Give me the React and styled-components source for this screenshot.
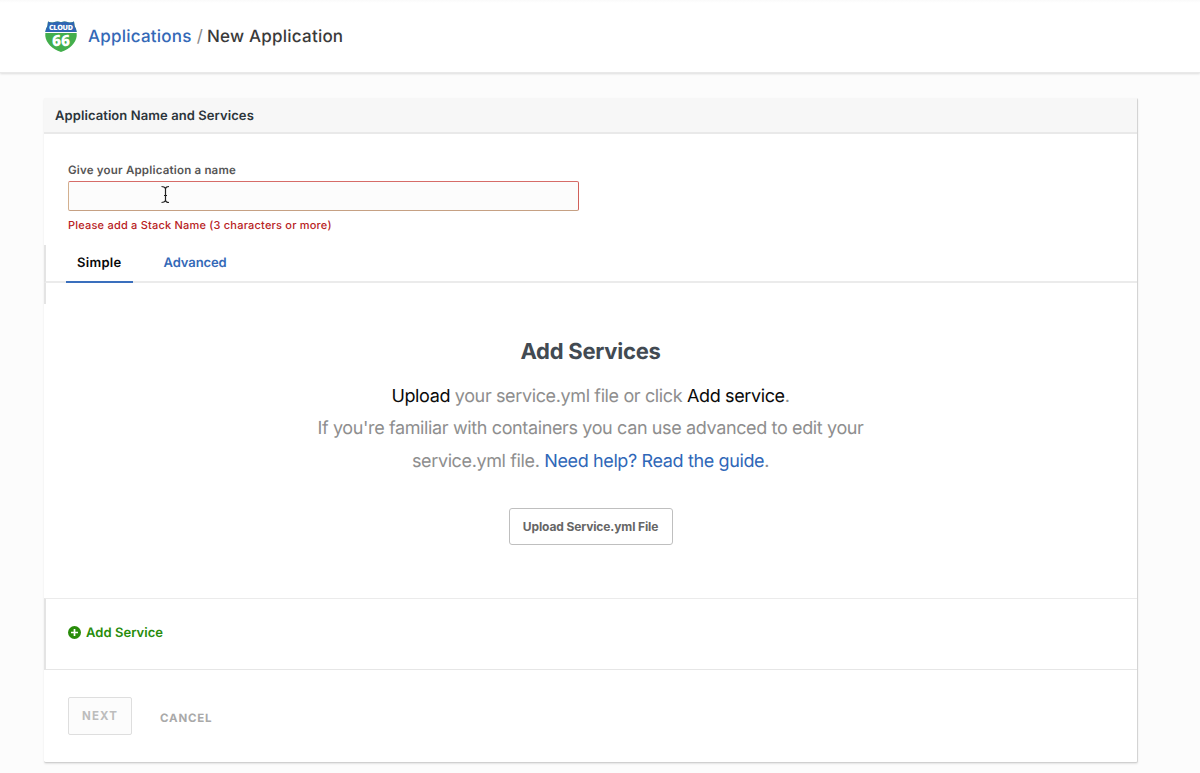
import React from "react";
import styled, { createGlobalStyle } from "styled-components";

const GlobalStyle = createGlobalStyle`
  *, *::before, *::after { box-sizing: border-box; }
  body {
    margin: 0;
    height: 773px;
    overflow: hidden;
    background: #fcfcfc;
    font-family: Inter, "Liberation Sans", sans-serif;
    text-rendering: geometricPrecision;
  }
  h1, h2, p { margin: 0; }
  button { font-family: inherit; cursor: pointer; }
`;

const Header = styled.header`
  height: 73px;
  padding: 0 45px;
  display: flex;
  align-items: center;
  background: linear-gradient(#fafafa, #fff 3px);
  border-bottom: 1px solid #e9e9e9;
  box-shadow: 0 1px 2px rgba(0, 0, 0, 0.12);
`;

const Logo = styled.svg`
  width: 32px;
  height: 33px;
  flex: none;
`;

const Breadcrumb = styled.h1`
  margin-left: 11px;
  padding-top: 1px;
  display: flex;
  font-size: 17px;
  line-height: 24px;
  font-weight: 500;
  letter-spacing: 0.22px;
  color: #3a3a3a;
`;

const CrumbLink = styled.a`
  color: #3469b7;
`;

const Slash = styled.span`
  margin: 0 4px 0 5px;
  font-weight: 400;
  color: #8a8a8a;
`;

const Card = styled.main`
  width: 1094px;
  height: 665px;
  margin: 25px 0 0 44px;
  display: flex;
  flex-direction: column;
  background: #fff;
  border-right: 1px solid #d4d4d4;
  border-bottom: 1px solid #d0d0d0;
  border-radius: 2px;
  box-shadow: 0 1px 2px rgba(0, 0, 0, 0.1);
`;

const CardTitle = styled.h2`
  height: 36px;
  padding: 1px 0 0 11px;
  background: #f7f7f7;
  border-bottom: 2px solid #e9e9e9;
  font-size: 13px;
  line-height: 35px;
  font-weight: 600;
  letter-spacing: 0.08px;
  color: #2c353b;
`;

const NameField = styled.div`
  height: 111px;
  padding: 28px 24px 0;
  display: flex;
  flex-direction: column;
`;

const Label = styled.label`
  font-size: 11.5px;
  line-height: 16px;
  font-weight: 600;
  letter-spacing: 0.2px;
  color: #555;
`;

const InputBox = styled.div`
  position: relative;
  width: 511px;
  margin: 3px 0 6px;
`;

const Input = styled.input`
  display: block;
  width: 100%;
  height: 30px;
  padding: 0 8px;
  outline: none;
  background: #fcfcfc;
  border: 1px solid;
  border-color: #d66c68 #d0605a #c6a184 #d3b08f;
  border-radius: 2px;
`;

const TextCursor = styled.svg`
  position: absolute;
  left: 92px;
  top: 4px;
  width: 10px;
  height: 19px;
`;

const ErrorText = styled.p`
  font-size: 11px;
  line-height: 16px;
  font-weight: 500;
  letter-spacing: 0.21px;
  color: #b8221e;
`;

const Tabs = styled.nav`
  height: 38px;
  padding-left: 20px;
  display: flex;
  gap: 20px;
  border-left: 2px solid #e4e4e4;
  border-bottom: 2px solid #ebebeb;
`;

const Tab = styled.a`
  height: 38px;
  padding: 0 11px;
  font-size: 13px;
  line-height: 36px;
  font-weight: 600;
  letter-spacing: ${(p) => (p.$active ? "0.3px" : "-0.1px")};
  color: ${(p) => (p.$active ? "#080808" : "#3469b7")};
  border-bottom: 2px solid ${(p) => (p.$active ? "#3a6fbd" : "transparent")};
`;

const Empty = styled.section`
  height: 315px;
  display: flex;
  flex-direction: column;
  align-items: center;
  background: linear-gradient(#e4e4e4, #e4e4e4) 0 0 / 2px 21px no-repeat;
`;

const EmptyTitle = styled.h2`
  margin-top: 54px;
  font-size: 22px;
  line-height: 30px;
  font-weight: 650;
  letter-spacing: -0.25px;
  color: #424a52;
`;

const EmptyText = styled.p`
  margin-top: 13.5px;
  text-align: center;
  font-size: 18px;
  line-height: 32.6px;
  letter-spacing: -0.37px;
  color: #8e8e8e;
`;

const Line = styled.span`
  display: block;
  white-space: nowrap;
`;

const Strong = styled.span`
  color: #0a0a0a;
`;

const GuideLink = styled.a`
  color: #2f67b8;
`;

const UploadButton = styled.button`
  width: 164px;
  height: 37px;
  margin-top: 29.5px;
  padding: 0;
  background: #fff;
  border: 1px solid #bfbfbf;
  border-radius: 3px;
  font-size: 12px;
  font-weight: 650;
  letter-spacing: -0.12px;
  color: #666;
  white-space: nowrap;
`;

const AddRow = styled.div`
  height: 72px;
  padding: 0 22px 3px;
  display: flex;
  align-items: center;
  gap: 5px;
  border-left: 2px solid #e4e4e4;
  border-top: 1px solid #ebebeb;
  border-bottom: 1px solid #e6e6e6;
  font-size: 13px;
  line-height: 18px;
  font-weight: 600;
  letter-spacing: 0.05px;
  color: #288c0a;
`;

const PlusIcon = styled.svg`
  width: 13px;
  height: 13px;
`;

const Footer = styled.footer`
  padding: 27px 24px 0;
  display: flex;
  gap: 28px;
`;

const NextButton = styled.button`
  width: 64px;
  height: 38px;
  padding: 0;
  background: #fcfcfc;
  border: 1px solid #dedede;
  border-radius: 2px;
  font-size: 11.5px;
  font-weight: 700;
  letter-spacing: 1.1px;
  color: #bdbdbd;
`;

const CancelButton = styled.a`
  padding-top: 2px;
  font-size: 11.5px;
  line-height: 38px;
  font-weight: 700;
  letter-spacing: 0.8px;
  color: #a9a9a9;
`;

export default function App() {
  return (
    <>
      <GlobalStyle />
      <Header>
        <Logo viewBox="0 0 32 33">
          <path
            d="M3 1.5Q6 3.300 9.500 2Q12.500 .7 16 2.300Q19.500 .7 22.500 2Q26 3.300 29 1.500Q29 6 31 9Q32 12 31.700 16C31 23 25 29 16 32C7 29 1 23 .3 16Q0 12 1 9Q3 6 3 1.500Z"
            fill="#43ae4c"
          />
          <path
            d="M3 1.500Q6 3.300 9.500 2Q12.500 .7 16 2.300Q19.500 .7 22.500 2Q26 3.300 29 1.500Q29 6 31 9L31.700 12H.3L1 9Q3 6 3 1.500Z"
            fill="#2f66b3"
          />
          <path d="M0 12.500H32" stroke="#fff" strokeWidth="1" />
          <text x="16" y="10.300" textAnchor="middle" textLength="24" fill="#fff" fontFamily="Open Sans" fontSize="7.200" fontWeight="800">
            CLOUD
          </text>
          <text x="16" y="26" textAnchor="middle" textLength="18" lengthAdjust="spacingAndGlyphs" fill="#fff" fontFamily="Open Sans" fontSize="15.500" fontWeight="800">
            66
          </text>
        </Logo>
        <Breadcrumb>
          <CrumbLink>Applications</CrumbLink>
          <Slash>/</Slash>
          <span>New Application</span>
        </Breadcrumb>
      </Header>
      <Card>
        <CardTitle>Application Name and Services</CardTitle>
        <NameField>
          <Label htmlFor="app-name">Give your Application a name</Label>
          <InputBox>
            <Input id="app-name" />
            <TextCursor viewBox="0 0 10 19" fill="none" stroke="#222" strokeWidth="1.2">
              <path d="M1.500 1.500Q4.500 1.500 5.500 3.500Q6 1.500 9 1.500M5.500 3.500V15.500M1.500 17.500Q4.500 17.500 5.500 15.500Q6 17.500 9 17.500M4 10.500H7" />
            </TextCursor>
          </InputBox>
          <ErrorText>Please add a Stack Name (3 characters or more)</ErrorText>
        </NameField>
        <Tabs>
          <Tab $active>Simple</Tab>
          <Tab>Advanced</Tab>
        </Tabs>
        <Empty>
          <EmptyTitle>Add Services</EmptyTitle>
          <EmptyText>
            <Line>
              <Strong>Upload</Strong> your service.yml file or click <Strong>Add service</Strong>.
            </Line>
            <Line>If you're familiar with containers you can use advanced to edit your</Line>
            <Line>
              service.yml file. <GuideLink>Need help? Read the guide</GuideLink>.
            </Line>
          </EmptyText>
          <UploadButton>Upload Service.yml File</UploadButton>
        </Empty>
        <AddRow>
          <PlusIcon viewBox="0 0 13 13">
            <circle cx="6.500" cy="6.500" r="6.500" fill="#288c0a" />
            <path d="M6.500 3V10M3 6.500H10" stroke="#fff" strokeWidth="1.7" />
          </PlusIcon>
          <span>Add Service</span>
        </AddRow>
        <Footer>
          <NextButton>NEXT</NextButton>
          <CancelButton>CANCEL</CancelButton>
        </Footer>
      </Card>
    </>
  );
}
